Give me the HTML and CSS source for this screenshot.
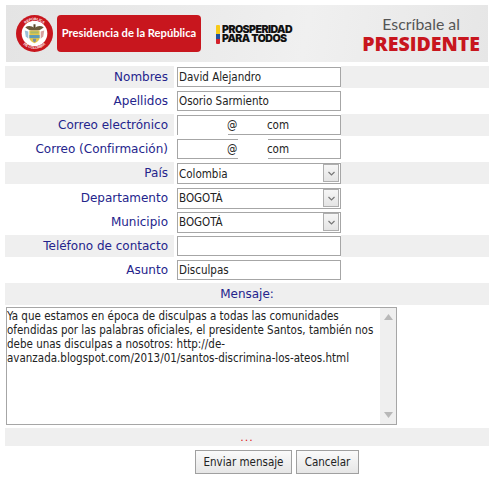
FILE: index.html
```html
<!DOCTYPE html>
<html lang="es">
<head>
<meta charset="utf-8">
<title>Escríbale al Presidente</title>
<link rel="stylesheet" href="styles.css">
</head>
<body>
<div class="page">
  <header class="header">
    <svg class="emblem" viewBox="0 0 36 36" width="37" height="37" aria-hidden="true">
      <circle cx="18" cy="18" r="18" fill="#c8161e"/>
      <circle cx="18" cy="18" r="12.5" fill="#fff"/>
      <defs>
        <path id="arcTop" d="M5 18a13 13 0 0 1 26 0"/>
        <path id="arcBot" d="M3 18a15 15 0 0 0 30 0"/>
      </defs>
      <text class="ring" text-anchor="middle"><textPath href="#arcTop" startOffset="50%">REPÚBLICA</textPath></text>
      <text class="ring" text-anchor="middle"><textPath href="#arcBot" startOffset="50%">DE COLOMBIA</textPath></text>
      <path d="M9 12c3-2 6-2 9 1 3-3 6-3 9-1-2 2-4 3-6 3h-6c-2 0-4-1-6-3z" fill="#6b5a3a"/>
      <path d="M17 9h2v4h-2z" fill="#5c4a2e"/>
      <path d="M8.500 15l3.500 1v7l-2.500-2z" fill="#9cc0d8"/>
      <path d="M27.500 15l-3.500 1v7l2.500-2z" fill="#d9a0a0"/>
      <path d="M13 15h10v7c0 3-2.500 4.500-5 5.500-2.500-1-5-2.500-5-5.500z" fill="#e3c64a"/>
      <path d="M13 19.500h10v3H13z" fill="#5d9ab8"/>
      <path d="M14 16h8v2h-8z" fill="#a8b86a"/>
      <path d="M16.500 23h3v2.500l-1.500 1-1.500-1z" fill="#7a8fa0"/>
    </svg>
    <div class="seal">Presidencia de la República</div>
    <div class="prosperity">
      <span class="flag"></span>
      <span class="prosperity-text">PROSPERIDAD<br>PARA TODOS</span>
    </div>
    <div class="write">
      <div class="write-top">Escríbale al</div>
      <div class="write-main">PRESIDENTE</div>
    </div>
  </header>

  <form class="form">
    <div class="row alt">
      <label class="label">Nombres</label>
      <div class="field"><input class="control" type="text" value="David Alejandro"></div>
    </div>
    <div class="row">
      <label class="label">Apellidos</label>
      <div class="field"><input class="control" type="text" value="Osorio Sarmiento"></div>
    </div>
    <div class="row alt">
      <label class="label">Correo electrónico</label>
      <div class="field">
        <input class="control email" type="text" value="@         com">
        <span class="patch patch-a"></span>
      </div>
    </div>
    <div class="row">
      <label class="label">Correo (Confirmación)</label>
      <div class="field">
        <input class="control email" type="text" value="@         com">
        <span class="patch patch-b"></span>
        <span class="patch patch-c"></span>
      </div>
    </div>
    <div class="row alt">
      <label class="label">País</label>
      <div class="field">
        <select class="control select"><option>Colombia</option></select>
        <span class="arrow"><svg viewBox="0 0 15 17" width="15" height="17" aria-hidden="true"><path d="M4.500 7l3 3 3-3" fill="none" stroke="#777" stroke-width="1.2"/></svg></span>
      </div>
    </div>
    <div class="row">
      <label class="label">Departamento</label>
      <div class="field">
        <select class="control select"><option>BOGOTÁ</option></select>
        <span class="arrow"><svg viewBox="0 0 15 17" width="15" height="17" aria-hidden="true"><path d="M4.500 7l3 3 3-3" fill="none" stroke="#777" stroke-width="1.2"/></svg></span>
      </div>
    </div>
    <div class="row">
      <label class="label">Municipio</label>
      <div class="field">
        <select class="control select"><option>BOGOTÁ</option></select>
        <span class="arrow"><svg viewBox="0 0 15 17" width="15" height="17" aria-hidden="true"><path d="M4.500 7l3 3 3-3" fill="none" stroke="#777" stroke-width="1.2"/></svg></span>
      </div>
    </div>
    <div class="row alt">
      <label class="label">Teléfono de contacto</label>
      <div class="field"><input class="control" type="text"></div>
    </div>
    <div class="row">
      <label class="label">Asunto</label>
      <div class="field"><input class="control" type="text" value="Disculpas"></div>
    </div>
    <div class="row alt message-title">Mensaje:</div>

    <div class="message-box">
      <textarea class="message" rows="8">Ya que estamos en época de disculpas a todas las comunidades ofendidas por las palabras oficiales, el presidente Santos, también nos debe unas disculpas a nosotros: http://de-avanzada.blogspot.com/2013/01/santos-discrimina-los-ateos.html</textarea>
      <div class="scrollbar">
        <svg viewBox="0 0 9 6" width="9" height="6" aria-hidden="true"><path d="M4.500 0L9 6H0z" fill="#b8b8b8"/></svg>
        <svg viewBox="0 0 9 6" width="9" height="6" aria-hidden="true"><path d="M0 0h9L4.500 6z" fill="#b8b8b8"/></svg>
      </div>
    </div>

    <div class="status"><span class="dots">...</span></div>

    <div class="actions">
      <button class="button send" type="button">Enviar mensaje</button>
      <button class="button cancel" type="button">Cancelar</button>
    </div>
  </form>
</div>
</body>
</html>
```
FILE: styles.css
```css
* { box-sizing: border-box; }

html, body {
  margin: 0;
  background: #fff;
}

.page {
  width: 500px;
  height: 485px;
  padding: 5px 11px 0 5px;
  overflow: hidden;
  font-family: "DejaVu Sans", sans-serif;
}

.header {
  display: flex;
  align-items: center;
  height: 57px;
  margin: 0 1px 4px;
  padding: 0 8px 0 10px;
  background: linear-gradient(100deg, #e4e4e4 0%, #ececec 45%, #f0f0f0 62%, #e6e6e6 100%);
}

.emblem { flex: none; }

.ring {
  font-family: "Liberation Sans", sans-serif;
  font-size: 3.4px;
  font-weight: 700;
  fill: #fff;
}

.seal {
  flex: none;
  width: 144px;
  height: 37px;
  margin-left: 4px;
  margin-top: -1px;
  border-radius: 4px;
  background: #c8161e;
  color: #fff;
  font-family: "Lato", sans-serif;
  font-size: 11.2px;
  font-weight: 700;
  line-height: 36px;
  text-align: center;
  white-space: nowrap;
}

.prosperity {
  display: flex;
  align-items: stretch;
  flex: none;
  gap: 2px;
  margin-left: 15px;
  margin-top: 1px;
}

.flag {
  width: 4px;
  border-radius: 1px;
  background: linear-gradient(#f7ca18 0 50%, #1f4fa0 50% 75%, #d3202a 75%);
}

.prosperity-text {
  color: #111;
  font-family: "Inter", sans-serif;
  font-size: 10.6px;
  font-weight: 900;
  line-height: 9.5px;
  letter-spacing: -0.55px;
  white-space: nowrap;
}

.write {
  margin-left: auto;
  margin-top: 1px;
  text-align: center;
}

.write-top {
  color: #555;
  font-family: "Lato", sans-serif;
  font-size: 15.8px;
  line-height: 20px;
}

.write-main {
  color: #c8161e;
  font-family: "Open Sans", sans-serif;
  font-size: 19.5px;
  font-weight: 800;
  line-height: 20px;
  white-space: nowrap;
}

.form {
  display: flex;
  flex-direction: column;
  gap: 2.12px;
}

.row {
  display: flex;
  height: 22px;
  width: 484px;
}

.alt { background: #efefef; }

.label {
  width: 169px;
  padding-right: 6px;
  color: #24248c;
  font-size: 12px;
  line-height: 22px;
  text-align: right;
  white-space: nowrap;
}

.field {
  position: relative;
  flex: none;
  width: 167px;
  padding: 1px 0 1px 3px;
  background: #fff;
}

.control {
  display: block;
  width: 164px;
  height: 20px;
  margin: 0;
  padding: 0 0 0 1px;
  border: 1px solid #a6a6a6;
  border-radius: 0;
  outline: 0;
  background: #fff;
  color: #222;
  font-family: "DejaVu Sans Condensed", "DejaVu Sans", sans-serif;
  font-stretch: condensed;
  font-size: 11.5px;
}

.email { padding-left: 49px; }

.select {
  appearance: none;
  -webkit-appearance: none;
  height: 21px;
}

.arrow {
  position: absolute;
  top: 2px;
  left: 149px;
  width: 16px;
  height: 18px;
  border: 1px solid #aeaeae;
  background: linear-gradient(#f6f6f6, #e4e4e4);
  line-height: 0;
}

.patch {
  position: absolute;
  background: #fff;
}

.patch-a { left: 4px; top: 19px; width: 50px; height: 2px; }
.patch-b { left: 64px; top: 0; width: 30px; height: 2px; }
.patch-c { left: 64px; top: 20px; width: 30px; height: 2px; }

.message-title {
  justify-content: center;
  color: #24248c;
  font-size: 12px;
  line-height: 22px;
}

.message-box {
  display: flex;
  width: 391px;
  height: 118px;
  margin: 0 0 1px 1px;
  border: 1px solid #a6a6a6;
  background: #fff;
}

.message {
  flex: 1;
  min-width: 0;
  margin: 0;
  padding: 1px 0 0 0;
  border: 0;
  outline: 0;
  resize: none;
  overflow: hidden;
  color: #222;
  font-family: "DejaVu Sans Condensed", "DejaVu Sans", sans-serif;
  font-stretch: condensed;
  font-size: 11.5px;
  line-height: 14px;
}

.scrollbar {
  display: flex;
  flex: none;
  flex-direction: column;
  align-items: center;
  justify-content: space-between;
  width: 16px;
  padding: 6px 0;
  background: #efefef;
}

.status {
  height: 18px;
  width: 484px;
  background: #efefef;
  color: #e02020;
  font-size: 11px;
  line-height: 19px;
  text-align: center;
}

.dots { letter-spacing: 1px; }

.actions {
  display: flex;
  gap: 4px;
  margin-top: 1.6px;
  padding-left: 190px;
}

.button {
  height: 24px;
  padding: 0;
  border: 1px solid #a0a0a0;
  border-radius: 0;
  background: linear-gradient(#fafafa, #e6e6e6);
  color: #222;
  font-family: "DejaVu Sans Condensed", "DejaVu Sans", sans-serif;
  font-stretch: condensed;
  font-size: 11.5px;
}

.send { width: 97px; }
.cancel { width: 63px; }
```
